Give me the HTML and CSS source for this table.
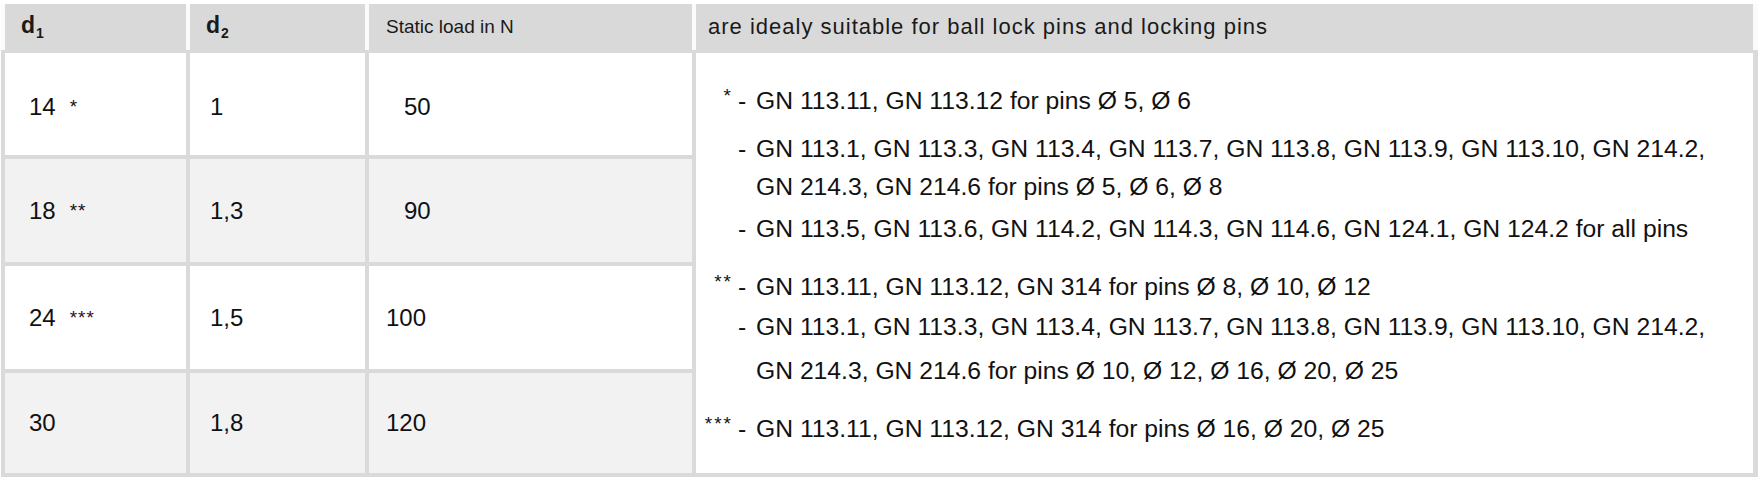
FILE: index.html
```html
<!DOCTYPE html>
<html lang="en">
<head>
<meta charset="utf-8">
<title>Static load table</title>
<link rel="stylesheet" href="styles.css">
</head>
<body>
<div class="table">
  <div class="head">
    <div class="hcell c1"><span class="dsym">d<sub>1</sub></span></div>
    <div class="hcell c2"><span class="dsym">d<sub>2</sub></span></div>
    <div class="hcell c3">Static load in N</div>
    <div class="hcell c4">are idealy suitable for ball lock pins and locking pins</div>
  </div>
  <div class="body">
    <div class="cell c1 r1">14<sup class="ast">*</sup></div>
    <div class="cell c2 r1">1</div>
    <div class="cell c3 r1"><span class="indent">50</span></div>

    <div class="cell c1 r2 alt">18<sup class="ast">**</sup></div>
    <div class="cell c2 r2 alt">1,3</div>
    <div class="cell c3 r2 alt"><span class="indent">90</span></div>

    <div class="cell c1 r3">24<sup class="ast tinted">***</sup></div>
    <div class="cell c2 r3">1,5</div>
    <div class="cell c3 r3">100</div>

    <div class="cell c1 r4 alt">30</div>
    <div class="cell c2 r4 alt">1,8</div>
    <div class="cell c3 r4 alt">120</div>

    <div class="notes">
      <div class="note g1">
        <span class="mark">*</span><span class="dash">-</span>
        <span class="txt">GN 113.11, GN 113.12 for pins Ø 5, Ø 6</span>
      </div>
      <div class="note g2">
        <span class="mark"></span><span class="dash">-</span>
        <span class="txt">GN 113.1, GN 113.3, GN 113.4, GN 113.7, GN 113.8, GN 113.9, GN 113.10, GN 214.2,<br>GN 214.3, GN 214.6 for pins Ø 5, Ø 6, Ø 8</span>
      </div>
      <div class="note g3">
        <span class="mark"></span><span class="dash">-</span>
        <span class="txt">GN 113.5, GN 113.6, GN 114.2, GN 114.3, GN 114.6, GN 124.1, GN 124.2 for all pins</span>
      </div>
      <div class="note g4">
        <span class="mark">**</span><span class="dash">-</span>
        <span class="txt">GN 113.11, GN 113.12, GN 314 for pins Ø 8, Ø 10, Ø 12</span>
      </div>
      <div class="note g5">
        <span class="mark"></span><span class="dash">-</span>
        <span class="txt">GN 113.1, GN 113.3, GN 113.4, GN 113.7, GN 113.8, GN 113.9, GN 113.10, GN 214.2,<br>GN 214.3, GN 214.6 for pins Ø 10, Ø 12, Ø 16, Ø 20, Ø 25</span>
      </div>
      <div class="note g6">
        <span class="mark">***</span><span class="dash">-</span>
        <span class="txt">GN 113.11, GN 113.12, GN 314 for pins Ø 16, Ø 20, Ø 25</span>
      </div>
    </div>
  </div>
</div>
</body>
</html>
```

FILE: styles.css
```css
html, body {
  margin: 0;
  padding: 0;
  background: #ffffff;
}

body {
  font-family: "Liberation Sans", Arial, sans-serif;
  color: #111111;
}

.table {
  margin: 4px 0 0 1px;
  width: 1757px;
}

.head {
  display: grid;
  grid-template-columns: 181px 175px 323px 1057px;
  grid-template-rows: 46px;
  column-gap: 4px;
  padding-left: 4px;
  background: #fbfbfb;
}

.hcell {
  background: #d9d9d9;
  display: flex;
  align-items: center;
  font-size: 19px;
  color: #1a1a1a;
  white-space: nowrap;
}

.hcell.c1 { padding-left: 16px; }
.hcell.c2 { padding-left: 16px; }
.hcell.c3 { padding-left: 17px; }
.hcell.c4 { padding-left: 12px; font-size: 22px; letter-spacing: 1px; }

.dsym {
  font-weight: bold;
  font-size: 23px;
  line-height: 1;
  letter-spacing: 0;
}

.dsym sub {
  font-size: 14px;
  vertical-align: -5px;
  margin-left: 1px;
}

.body {
  display: grid;
  grid-template-columns: 181px 175px 323px 1057px;
  grid-template-rows: 102px 103px 103px 100px;
  gap: 4px;
  background: #dadada;
  border: 4px solid #dadada;
  border-top-width: 3px;
}

.cell {
  background: #ffffff;
  display: flex;
  align-items: center;
  font-size: 24px;
  color: #111111;
}

.cell.alt { background: #f2f2f2; }

.cell.c1 { grid-column: 1; padding-left: 24px; }
.cell.c2 { grid-column: 2; padding-left: 20px; }
.cell.c3 { grid-column: 3; padding-left: 17px; }

.cell.r1 { grid-row: 1; padding-top: 6px; }
.cell.r2 { grid-row: 2; }
.cell.r3 { grid-row: 3; }
.cell.r4 { grid-row: 4; }

.indent { padding-left: 18px; }

.ast {
  font-size: 19px;
  vertical-align: 10px;
  margin-left: 14px;
  line-height: 0;
  letter-spacing: 1px;
}

.ast.tinted { color: #3d0c1c; }

.notes {
  grid-column: 4;
  grid-row: 1 / span 4;
  background: #ffffff;
  padding-top: 29px;
  font-size: 24.7px;
  line-height: 38px;
  color: #111111;
}

.note {
  display: grid;
  grid-template-columns: 40px 20px 1fr;
}

.mark {
  text-align: right;
  font-size: 19px;
  line-height: 28px;
  letter-spacing: 2px;
  padding-right: 3px;
  align-self: start;
}

.dash {
  padding-left: 2px;
}

.note.g2 { margin-top: 10px; }
.note.g3 { margin-top: 4px; }
.note.g4 { margin-top: 20px; }
.note.g5 { margin-top: -1px; line-height: 44px; }
.note.g6 { margin-top: 17px; }
```
